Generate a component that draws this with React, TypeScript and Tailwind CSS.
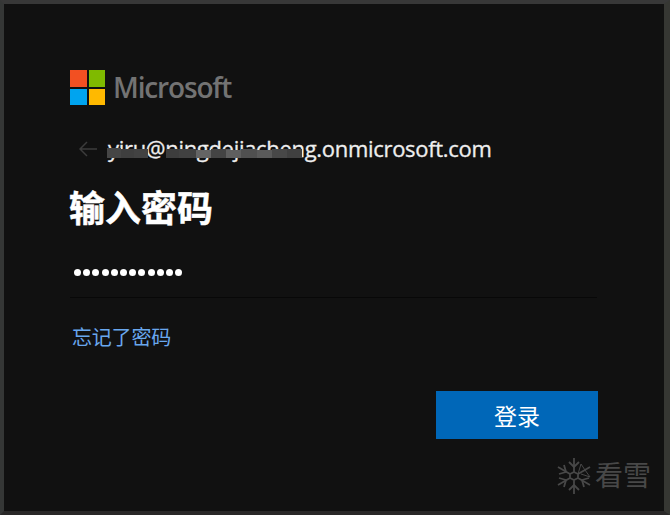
const smudge = [
  'w-[14px] h-[10px] bg-[#454545]', 'w-[13px] h-[9px] bg-[#3f3f3f]', 'w-[14px] h-[9px] bg-[#424242]',
  'w-[18px] h-0', 'w-[13px] h-[9px] bg-[#3d3d3d]', 'w-[17px] h-[9px] bg-[#414141]',
  'w-[15px] h-[8px] bg-[#646464]', 'w-[15px] h-[9px] bg-[#444444]', 'w-[15px] h-[8px] bg-[#5f5f5f]',
  'w-[16px] h-[9px] bg-[#505050]', 'w-[15px] h-[8px] bg-[#5a5a5a]', 'w-[15px] h-[9px] bg-[#484848]', 'w-[15px] h-[9px] bg-[#404040]',
];

function Logo() {
  return (
    <div className="flex h-[35px] items-center gap-[8px]">
      <div className="grid size-[35px] shrink-0 grid-cols-2 gap-[2px]">
        <span className="bg-[#f25022]" />
        <span className="bg-[#7fba00]" />
        <span className="bg-[#00a4ef]" />
        <span className="bg-[#ffb900]" />
      </div>
      <span className="font-['Open_Sans',sans-serif] text-[28px] leading-[35px] font-semibold tracking-[-1.15px] text-[#737373]">
        Microsoft
      </span>
    </div>
  );
}

function Identity() {
  return (
    <div className="mt-[27px] flex h-[34px] items-center pl-[9px]">
      <svg width="18" height="16" viewBox="0 0 18 16" fill="none" stroke="#3c3c3c" strokeWidth="1.5" className="shrink-0">
        <path d="M8 1 1 8l7 7M1 8h17" />
      </svg>
      <div className="relative -mt-[2px] ml-[11px] font-['Open_Sans',sans-serif] text-[22px] leading-[34px] tracking-[-0.31px] whitespace-nowrap text-[#eeeeee] [-webkit-text-stroke:0.3px_#eeeeee]">
        yiru@ningdejiacheng.onmicrosoft.com
        <div className="absolute top-[17px] left-[-1px] flex h-[10px] items-end">
          {smudge.map((tone, i) => (
            <span key={i} className={tone} />
          ))}
        </div>
      </div>
    </div>
  );
}

function Watermark() {
  return (
    <div className="flex h-[38px] w-[100px] items-center gap-[4px]">
      <svg width="34" height="38" viewBox="0 0 34 38" fill="none" stroke="#484848" strokeWidth="1.8" className="shrink-0">
        <path d="M17 15l4 2v4l-4 2-4-2v-4zM17 15V1M17 23v14M13 17 1 10M21 17l12-7M13 21 1 28M21 21l12 7" />
        <path d="m12 5 5 5 5-5M12 33l5-5 5 5M2 17l7-2-2-7M2 21l7 2-2 7M32 21l-7 2 2 7" />
        <path strokeWidth="1" d="m21 17 3-10 4 6 5 7-9-3" />
      </svg>
      <span className="-mt-[4px] shrink-0 text-[28px] leading-[38px] whitespace-nowrap text-[#484848]">看雪</span>
    </div>
  );
}

export default function App() {
  return (
    <div className="h-[515px] w-[670px] overflow-hidden border-t-4 border-r-6 border-b-4 border-l-4 border-t-[#383838] border-r-[#363733] border-b-[#292828] border-l-[#353736] bg-[#111111] font-['Noto_Sans_CJK_SC',sans-serif]">
      <main className="flex h-full flex-col pt-[66px] pr-[66px] pl-[66px]">
        <Logo />
        <Identity />
        <h1 className="mt-[15px] -ml-px text-[36px] leading-[50px] font-bold text-white [-webkit-text-stroke:0.5px_white]">输入密码</h1>
        <div className="mt-[16px] flex h-[51px] w-[527px] shrink-0 border-b border-[#080808] pt-[22px] pl-[4px]">
          <div className="flex gap-[2.2px]">
            {Array.from({ length: 12 }, (_, i) => (
              <span key={i} className="size-[7px] rounded-full bg-white" />
            ))}
          </div>
        </div>
        <a className="mt-[23px] ml-[2px] text-[20px] leading-[32px] tracking-[-0.2px] text-[#69a7ee]">忘记了密码</a>
        <button className="mt-[38px] ml-[366px] h-[48px] w-[162px] shrink-0 bg-[#0067b8] text-[23px] leading-[48px] text-white">
          登录
        </button>
        <div className="mt-[18px] ml-[487px]">
          <Watermark />
        </div>
      </main>
    </div>
  );
}
